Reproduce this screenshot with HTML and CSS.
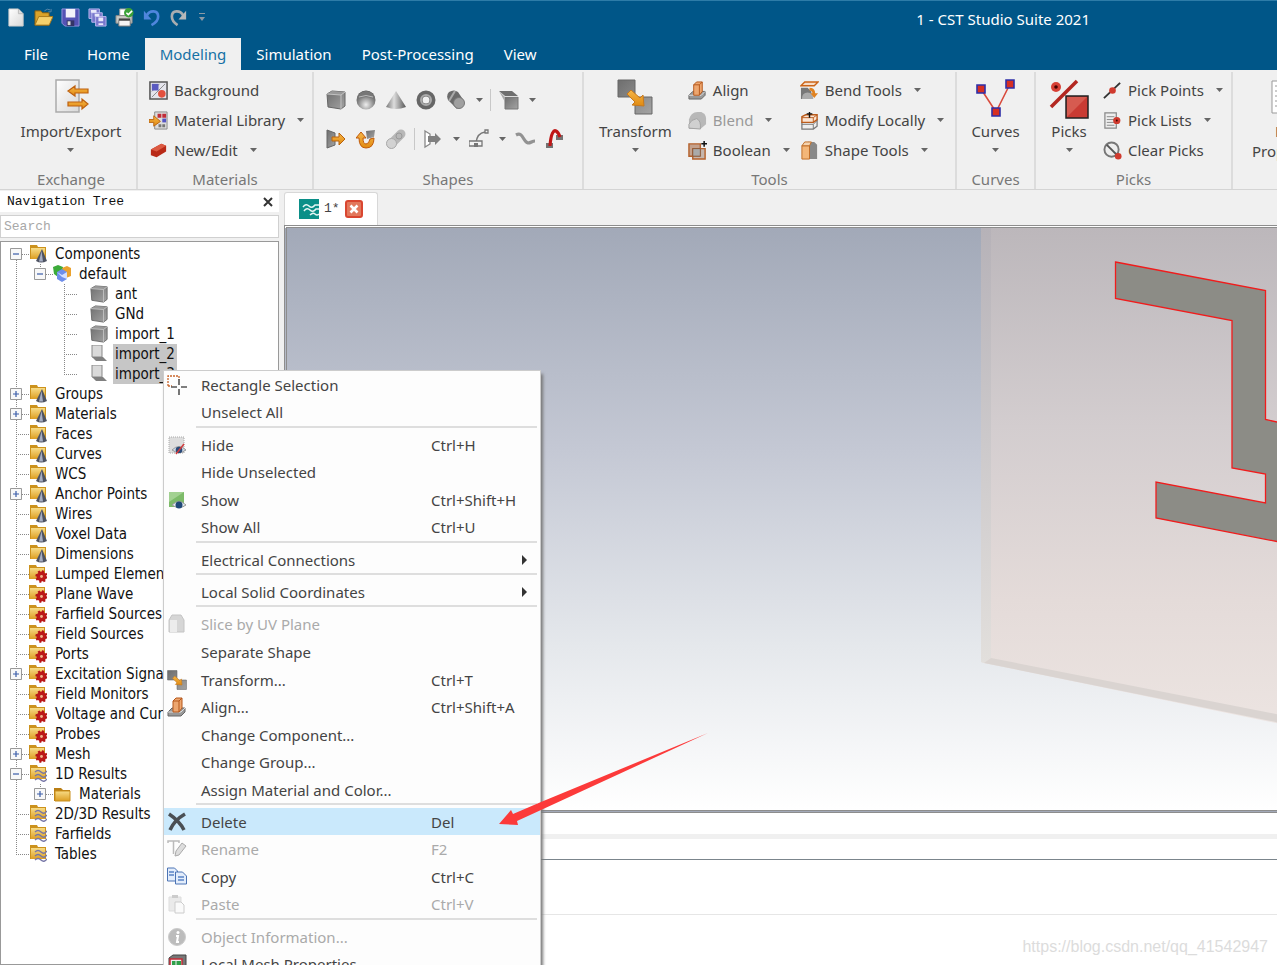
FILE: index.html
```html
<!DOCTYPE html>
<html lang="en">
<head>
<meta charset="utf-8">
<title>1 - CST Studio Suite 2021</title>
<link rel="stylesheet" href="styles.css">
</head>
<body>
<svg class="defs" aria-hidden="true">
  <defs>
    <linearGradient id="g-grey" x1="0" y1="0" x2="1" y2="1"><stop offset="0" stop-color="#6e6e6e"/><stop offset="1" stop-color="#a4a4a4"/></linearGradient>
    <linearGradient id="g-cone" x1="0" x2="1"><stop offset="0" stop-color="#777"/><stop offset=".4" stop-color="#ddd"/><stop offset="1" stop-color="#555"/></linearGradient>
    <linearGradient id="g-gold" x1="0" y1="0" x2="0" y2="1"><stop offset="0" stop-color="#f8dc86"/><stop offset="1" stop-color="#dc9e22"/></linearGradient>
    <linearGradient id="g-orange" x1="0" y1="0" x2="0" y2="1"><stop offset="0" stop-color="#f6b648"/><stop offset="1" stop-color="#e08a10"/></linearGradient>
    <linearGradient id="g-page" x1="0" y1="0" x2="1" y2="1"><stop offset="0" stop-color="#fff"/><stop offset="1" stop-color="#d8d8d8"/></linearGradient>
    <radialGradient id="g-ball" cx=".5" cy=".75" r=".7"><stop offset="0" stop-color="#eee"/><stop offset=".6" stop-color="#888"/><stop offset="1" stop-color="#555"/></radialGradient>
    <linearGradient id="g-face" x1="0" y1="0" x2="0" y2="1"><stop offset="0" stop-color="#bcb7bb"/><stop offset=".4" stop-color="#d3cdcf"/><stop offset=".75" stop-color="#e4dbd9"/><stop offset="1" stop-color="#ece4e1"/></linearGradient>
    <linearGradient id="g-side" x1="0" y1="0" x2="0" y2="1"><stop offset="0" stop-color="#b6b2b8"/><stop offset=".5" stop-color="#ccc9cb"/><stop offset="1" stop-color="#e2dfdc"/></linearGradient>
  </defs>
  <symbol id="caret" viewBox="0 0 7 4"><path d="M0 0h7L3.500 4z" fill="#666"/></symbol>
  <symbol id="new" viewBox="0 0 20 20"><path d="M2 1h10l5 5v13H2z" fill="url(#g-page)" stroke="#ccc"/><path d="M12 1v5h5" fill="#ddd" stroke="#bbb"/></symbol>
  <symbol id="open" viewBox="0 0 20 20"><path d="M1 3h6l2 2h7v13H1z" fill="#dba32a" stroke="#7d5a12"/><path d="M5 9h15l-4 9H1z" fill="#f5d06c" stroke="#a8781a"/><path d="M11 3q3-3 6-1m1-1v3h-3" fill="none" stroke="#5a87a8"/></symbol>
  <symbol id="save" viewBox="0 0 20 20"><path d="M1 1h18v18H4l-3-3z" fill="#5453b5" stroke="#9695dd"/><path d="M5 1h10v9H5z" fill="#f2f2fa"/><path d="M6 13h8v6H6z" fill="#333466"/><path d="M7 14h3v4H7z" fill="#ddd"/></symbol>
  <symbol id="saveall" viewBox="0 0 20 20"><g fill="#7876cc" stroke="#b9b8ee"><path d="M1 1h11v10H1z"/><path d="M4 5h11v10H4z"/><path d="M8 9h11v10H8z"/></g><path d="M3 2h6v3H3zM7 6h5v3H7zM11 10h5v4h-5zM11 16h5v2h-5z" fill="#e8e8fa"/></symbol>
  <symbol id="print" viewBox="0 0 20 20"><path d="M5 1h9v7H5z" fill="#fff" stroke="#999"/><path d="M1 8h17v8H1z" fill="#c9c9c4" stroke="#888"/><path d="M4 13h12v6H4z" fill="#f4f4f4" stroke="#777"/><path d="M4 11h12v2H4z" fill="#444"/><circle cx="14.500" cy="5" r="5" fill="#3ba238"/><path d="M12 5l2 2 4-4" fill="none" stroke="#fff" stroke-width="1.600"/></symbol>
  <symbol id="undo" viewBox="0 0 20 20"><path d="M5 8c3-6 12-6 12 1 0 4-3 7-7 9" fill="none" stroke="#4f86dd" stroke-width="2.800"/><path d="M2 3v9h8z" fill="#4f86dd"/></symbol>
  <symbol id="redo" viewBox="0 0 20 20"><path d="M15 8C12 2 3 2 3 9c0 4 3 7 6 9" fill="none" stroke="#a9adb0" stroke-width="2.800"/><path d="M18 3v9h-8z" fill="#b5b8ba"/></symbol>
  <symbol id="qat" viewBox="0 0 8 9"><path d="M1 0h6v1H1zM1 4h6L4 8z" fill="#8a9aa6"/></symbol>
  <symbol id="impexp" viewBox="-2 0 36 36"><path d="M1 1h23v32H1z" fill="url(#g-page)" stroke="#aaa" stroke-width="1.500"/><g fill="url(#g-orange)" stroke="#bd600f" stroke-width="1.200"><path d="M13 12l7-5v3h13v4H20v3z"/><path d="M33 25l-6 5v-3H13v-4h14v-3z"/></g></symbol>
  <symbol id="background" viewBox="0 0 20 20"><path d="M1 1h18v18H1z" fill="#e4e4ec" stroke="#555" stroke-width="1.600"/><path d="M3 17L17 3M11 3L3 11" stroke="#888"/><path d="M3 3h7v7H3z" fill="#5a5ac0"/><circle cx="13.500" cy="13.500" r="4" fill="#e2503e"/></symbol>
  <symbol id="matlib" viewBox="0 0 20 20"><path d="M6 1h13v18H6z" fill="#ddd" stroke="#888"/><path d="M9 3h4v4H9zM14 3h4v4h-4z" fill="#c22c38"/><path d="M14 8h4v4h-4z" fill="#5454c4"/><path d="M10 14h3v3h-3zM14 14h3v3h-3z" fill="#777"/><path d="M0 9h5V5l7 6-7 5v-4H0z" fill="url(#g-orange)" stroke="#b96513"/></symbol>
  <symbol id="brick" viewBox="0 0 20 20"><path d="M2 9l11-6 5 2v6L8 17l-6-2z" fill="#b92a17"/><path d="M2 9l11-6 5 2L8 11z" fill="#dc5a42"/></symbol>
  <symbol id="cube" viewBox="0 0 20 20"><path d="M1 4l5-3 13 1v14l-4 3-13-2z" fill="url(#g-grey)" stroke="#666"/><path d="M6 1l13 1-4 3-14-1z" fill="#999"/><path d="M1 4l14 1 4-3M15 5v14" fill="none" stroke="#c2c2c2"/></symbol>
  <symbol id="sphere" viewBox="0 0 20 20"><circle cx="10" cy="10" r="9.500" fill="url(#g-ball)"/><path d="M1 9q9-4 18 0Q17 1 10 1T1 9" fill="#777"/><path d="M3 7q7-3 14 0" fill="none" stroke="#bbb"/></symbol>
  <symbol id="cone" viewBox="0 0 20 20"><path d="M10 1L0 17q10 4 20 0z" fill="url(#g-cone)"/></symbol>
  <symbol id="torus" viewBox="0 0 20 20"><circle cx="10" cy="10" r="6.500" fill="none" stroke="#666" stroke-width="6"/><circle cx="10" cy="10" r="5" fill="none" stroke="#aaa" stroke-width="2"/></symbol>
  <symbol id="cylinder" viewBox="0 0 20 20"><path d="M3 2q5-3 9 0l6 9-7 8L2 10Q0 5 3 2" fill="#6b6b6b"/><path d="M9 1L3 11" stroke="#aaa" stroke-width="2"/><circle cx="13" cy="13" r="5.500" fill="#a0a0a0" stroke="#777"/></symbol>
  <symbol id="extr" viewBox="0 0 20 20"><path d="M0 1h13l6 5H6z" fill="#6e6e6e"/><path d="M6 7h13v12H6z" fill="url(#g-grey)" stroke="#777"/><path d="M6 6.500h13" stroke="#ddd"/><path d="M0 1l6 6v5z" fill="#aaa"/></symbol>
  <symbol id="extrude" viewBox="0 0 20 20"><path d="M1 1l8 3v12l-8 3z" fill="url(#g-grey)" stroke="#666"/><path d="M6 8h7V4l6 6-6 6v-4H6z" fill="url(#g-orange)" stroke="#b8620e"/></symbol>
  <symbol id="rotate" viewBox="0 0 20 20"><path d="M10 2l9-1-1 7-7 2z" fill="url(#g-grey)"/><path d="M18 9q0 10-8 10-7 0-7-10H0l5-6 5 6H7q0 6 3 6t4-5z" fill="url(#g-orange)" stroke="#c05a0a"/></symbol>
  <symbol id="loft" viewBox="0 0 20 20"><path d="M5 15L15 5" stroke="#b8b8b8" stroke-width="9" stroke-linecap="round"/><circle cx="5.500" cy="14.500" r="5" fill="#d2d2d2" stroke="#aaa"/><circle cx="13" cy="7" r="3" fill="none" stroke="#999"/></symbol>
  <symbol id="arrowface" viewBox="0 0 20 20"><path d="M2 2l5 3v10l-5 3z" fill="#fff" stroke="#888" stroke-width="1.300"/><path d="M5 7h7V4l6 6-6 6v-3H5z" fill="#808080"/></symbol>
  <symbol id="curvebox" viewBox="0 0 20 20"><path d="M7 14Q8 4 16 3" fill="none" stroke="#777" stroke-width="1.500"/><path d="M0 12h13v5H0zM16 1h3v3h-3z" fill="#f4f4f4" stroke="#777" stroke-width="1.300"/><path d="M5 14h4v4H5z" fill="#777"/></symbol>
  <symbol id="wave" viewBox="0 0 20 20"><path d="M1 6c7-4 7 7 12 8 3 0 4-2 7-2" fill="none" stroke="#929292" stroke-width="3.200"/></symbol>
  <symbol id="bond" viewBox="0 0 20 20"><path d="M1 14h7v5H1zM11 6h7v5h-7z" fill="#737373"/><path d="M5 17C6 3 9 1 11 2s3 3 4 6" fill="none" stroke="#bf1717" stroke-width="3.200"/></symbol>
  <symbol id="transform" viewBox="0 0 36 36"><path d="M1 1h17v17H1zM18 18h17v17H18z" fill="url(#g-grey)" stroke="#666"/><path d="M14 11l9 8 3-3 1 11-12-1 3-3-8-8z" fill="url(#g-orange)" stroke="#c7791d"/></symbol>
  <symbol id="align" viewBox="0 0 20 20"><path d="M1 15l4-4h13v4l-4 4H1z" fill="#999" stroke="#666"/><path d="M1 15h13l4-4" fill="none" stroke="#ddd"/><path d="M6 4l3-3h6v10l-3 4H6z" fill="#eda66f" stroke="#b5571b"/><path d="M6 4h6l3-3M12 4v11" fill="none" stroke="#b5571b"/></symbol>
  <symbol id="blend" viewBox="0 0 20 20"><path d="M1 9Q3 1 10 1h4q5 2 5 7v6l-6 5H1z" fill="#b8b8b8"/><path d="M1 18v-4q2-5 8-6 5 2 4 11z" fill="#d0d0d0" stroke="#a2a2a2"/></symbol>
  <symbol id="boolean" viewBox="0 0 20 20"><path d="M1 3h12v13H1z" fill="#c4a18c" stroke="#b5622d" stroke-width="1.500"/><path d="M5 8h13v11H5z" fill="#b29d90" fill-opacity=".7" stroke="#b5622d" stroke-width="1.500"/><path d="M5 8h8v8H5z" fill="#aaa" stroke="#8d5a39"/><path d="M17 0v6M14 3h6" stroke="#111" stroke-width="1.600"/></symbol>
  <symbol id="bend" viewBox="0 0 20 20"><path d="M1 5l4-4h14l-4 4z" fill="#f7dcc6" stroke="#cc6417" stroke-width="1.500"/><path d="M1 7h7l4 4v8H1z" fill="#777"/><path d="M2 19q0-7 6-7t6 7z" fill="#aaa"/><path d="M10 7q6 0 6 6h3l-4 5-4-5h2q0-3-3-3z" fill="#e08220"/></symbol>
  <symbol id="modify" viewBox="0 0 20 20"><path d="M2 12l4-3h12v7l-4 3H2z" fill="#eee" stroke="#777" stroke-width="1.300"/><path d="M2 14h12l4-4M14 14v5" fill="none" stroke="#777"/><path d="M2 6l4-2h12v5l-4 3H2z" fill="#fbe4d2" stroke="#bb5c1c" stroke-width="1.500"/><path d="M2 7h12v5M14 7l4-3" fill="none" stroke="#bb5c1c"/><path d="M10 7V1M7 3h6" stroke="#111" stroke-width="1.500"/></symbol>
  <symbol id="shapetools" viewBox="0 0 20 20"><path d="M3 4q3-4 8-3h4l3 3v15H3z" fill="#888"/><path d="M2 5h8v14H2z" fill="#f3b678" stroke="#c06c24"/><path d="M2 5l3-4h7l-2 4z" fill="#f5d3ae" stroke="#c06c24"/></symbol>
  <symbol id="curves" viewBox="0 0 40 40"><path d="M5 10L20 33 34 5" fill="none" stroke="#d94a3c" stroke-width="1.600"/><g fill="#d62f22" stroke="#2f2fa8" stroke-width="1.600"><path d="M1 6h8v8H1zM30 1h8v8h-8zM16 29h8v8h-8z"/></g></symbol>
  <symbol id="picks" viewBox="0 0 40 40"><path d="M2 28L28 2" stroke="#b32720" stroke-width="3.500"/><circle cx="7" cy="8" r="5" fill="#d74035"/><circle cx="7" cy="8" r="1.800" fill="#400"/><path d="M17 17h22v22H17z" fill="#c93b33" stroke="#222" stroke-width="1.500"/><path d="M18 38V18h20z" fill="#d65b50"/></symbol>
  <symbol id="pickpt" viewBox="0 0 20 20"><path d="M1 18L18 2" stroke="#333" stroke-width="2"/><circle cx="10" cy="10" r="3.500" fill="#d03a2e"/></symbol>
  <symbol id="picklist" viewBox="0 0 20 20"><path d="M2 2h12v16H2z" fill="#eee" stroke="#888" stroke-width="1.300"/><path d="M4 6h8M4 9h8M4 12h8M4 15h8" stroke="#888"/><circle cx="14.500" cy="10" r="3.800" fill="#d03a2e"/><circle cx="14.500" cy="10" r="1" fill="#400"/></symbol>
  <symbol id="clear" viewBox="0 0 20 20"><circle cx="9" cy="9" r="7.500" fill="#eee" stroke="#777" stroke-width="2"/><path d="M4 4l11 11" stroke="#555" stroke-width="2"/><circle cx="16" cy="16" r="3.500" fill="#d03a2e"/></symbol>
  <symbol id="props" viewBox="0 0 34 36"><path d="M1 2h30v32H1z" fill="#fff" stroke="#999"/><path d="M4 7h20M4 12h20M4 17h20M4 22h20M4 27h20" stroke="#999"/></symbol>
  <symbol id="folder" viewBox="0 0 18 18"><path d="M1 3h7l2 2h7v11H1z" fill="#b97e14"/><path d="M2 6h15v10H2z" fill="url(#g-gold)" stroke="#c98f1d"/></symbol>
  <symbol id="f-cone" viewBox="0 0 18 18"><path d="M1 0h7l1 2h8v12H1z" fill="#cc921d"/><path d="M2 3h14v11H2z" fill="url(#g-gold)"/><path d="M13 4L7 16q5 3 11 0z" fill="#4e5362"/><path d="M12.500 6L10 16.500h4z" fill="#a6aec4"/></symbol>
  <symbol id="f-gear" viewBox="0 0 18 18"><path d="M0 0h7l1 2h8v12H0z" fill="#cc921d"/><path d="M1 3h14v11H1z" fill="url(#g-gold)"/><circle cx="12.500" cy="11.500" r="5" fill="#bd1a1a" stroke="#b51616" stroke-width="2.400" stroke-dasharray="2 1.900"/><circle cx="12.500" cy="11.500" r="1.400" fill="#f0b890"/></symbol>
  <symbol id="f-wave" viewBox="0 0 18 18"><path d="M1 0h7l1 2h8v12H1z" fill="#cc921d"/><path d="M2 3h14v11H2z" fill="url(#g-gold)"/><path d="M6 7q3-3 6 0t6-1M6 11q3-3 6 0t6-1M6 15q3-3 6 0t6-1" fill="none" stroke="#7676a6" stroke-width="1.400"/></symbol>
  <symbol id="comps" viewBox="0 0 18 18"><path d="M0 2l5-2 5 2v7l-5 3-4-3z" fill="#3cab3a"/><path d="M9 3l5-2 4 2v8l-5 2z" fill="#eba22e"/><path d="M4 7l5-3 5 3v7l-5 3-5-3z" fill="#6f8eea"/><path d="M4 7l5 3 5-3v7l-5-2z" fill="#d5e0ff"/></symbol>
  <symbol id="sheet" viewBox="0 0 18 18"><path d="M2 0h10v12H2z" fill="#dadada" stroke="#888"/><path d="M2 12h11l4 4H6z" fill="#808080"/></symbol>
  <symbol id="plus" viewBox="0 0 12 12"><path d="M.5.500h11v11H.5z" fill="#f8f8f8" stroke="#999"/><path d="M3 6h6M6 3v6" stroke="#3a5da8" stroke-width="1.200"/></symbol>
  <symbol id="minus" viewBox="0 0 12 12"><path d="M.5.500h11v11H.5z" fill="#f8f8f8" stroke="#999"/><path d="M3 6h6" stroke="#3a5da8" stroke-width="1.200"/></symbol>
  <symbol id="rectsel" viewBox="0 0 20 20"><path d="M1 11V1h11v4M1 11h4" fill="none" stroke="#c9652b" stroke-width="1.300" stroke-dasharray="2 1"/><path d="M12 4v6M12 14v6M4 12h6M14 12h6" stroke="#555" stroke-width="1.600"/></symbol>
  <symbol id="hide" viewBox="0 0 20 20"><path d="M2 2h15v16H2z" fill="#ddd" stroke="#aaa" stroke-dasharray="1 1"/><path d="M5 15q7-7 14 0-7 5-14 0" fill="#cfdbe8" stroke="#999"/><circle cx="12" cy="15" r="3.300" fill="#294a78"/><path d="M9 19l8-10" stroke="#d23b3b" stroke-width="1.500"/></symbol>
  <symbol id="show" viewBox="0 0 20 20"><path d="M2 2h15v15H2z" fill="#7dbb69"/><path d="M2 2h15L2 12z" fill="#a2d191"/><path d="M5 15q7-7 14 0-7 5-14 0" fill="#e8eef4" stroke="#999"/><circle cx="12" cy="15" r="3.500" fill="#1f4878"/></symbol>
  <symbol id="slice" viewBox="0 0 20 20"><path d="M2 6l3-5h9l3 5v12H2z" fill="#d6d6d6" stroke="#c4c4c4"/><path d="M3 6h7v12H3z" fill="#ececec"/></symbol>
  <symbol id="delete" viewBox="0 0 20 20"><path d="M2 2c6 4 12 10 15 16M18 2C11 6 6 11 3 18" fill="none" stroke="#4a4f54" stroke-width="3.500"/></symbol>
  <symbol id="rename" viewBox="0 0 20 20"><path d="M1 4V2h11v2M6.500 2v13" fill="none" stroke="#bbb" stroke-width="1.500"/><path d="M8 17l1-5 6-8 4 3-7 9z" fill="#ddd" stroke="#aaa"/></symbol>
  <symbol id="copy" viewBox="0 0 20 20"><g fill="#e3edfb" stroke="#4c74b5"><path d="M.5 1h7l3 3v10H.5z"/><path d="M8.500 5h7l4 4v8h-11z"/></g><path d="M2 5h5M2 8h5M11 10h6M11 13h6" stroke="#5b84c6" stroke-width="1.300"/></symbol>
  <symbol id="paste" viewBox="0 0 20 20"><path d="M2 3h12v14H2z" fill="#eaeaea" stroke="#ddd"/><path d="M5 1h6v3H5z" fill="#ccc"/><path d="M8 8h6l3 3v8H8z" fill="#fafafa" stroke="#ccc"/></symbol>
  <symbol id="info" viewBox="0 0 20 20"><circle cx="10" cy="10" r="8.500" fill="#bcbcbc" stroke="#ccc"/><circle cx="11" cy="5.500" r="1.500" fill="#fff"/><path d="M9 9h2l-1 6h2" fill="none" stroke="#fff" stroke-width="2"/></symbol>
  <symbol id="mesh" viewBox="0 0 20 20"><path d="M2 4l4-3h13v15l-3 3H2z" fill="#777" stroke="#444"/><path d="M3 5h12v13H3z" fill="#eee" stroke="#c52c37" stroke-width="1.500"/><path d="M5 7h9v10H5z" fill="#2fa04a"/><path d="M9 7v10M5 12h9" stroke="#eee"/></symbol>
</svg>

<header class="titlebar">
  <div class="quick">
    <button aria-label="New"><svg><use href="#new"/></svg></button>
    <button aria-label="Open"><svg><use href="#open"/></svg></button>
    <button aria-label="Save"><svg><use href="#save"/></svg></button>
    <button aria-label="Save all"><svg><use href="#saveall"/></svg></button>
    <button aria-label="Print"><svg><use href="#print"/></svg></button>
    <button aria-label="Undo"><svg><use href="#undo"/></svg></button>
    <button aria-label="Redo"><svg><use href="#redo"/></svg></button>
    <button class="more" aria-label="Customize"><svg><use href="#qat"/></svg></button>
  </div>
  <h1>1 - CST Studio Suite 2021</h1>
</header>
<nav class="tabs">
  <button class="file">File</button><button>Home</button><button class="active">Modeling</button><button>Simulation</button><button>Post-Processing</button><button>View</button>
</nav>

<section class="ribbon">
  <div class="group exchange">
    <div class="tools">
      <button class="big"><svg><use href="#impexp"/></svg>Import/Export<svg class="caret"><use href="#caret"/></svg></button>
    </div>
    <h2>Exchange</h2>
  </div>
  <div class="group materials">
    <div class="tools">
      <div class="col">
        <button><svg><use href="#background"/></svg>Background</button>
        <button><svg><use href="#matlib"/></svg>Material Library<svg class="caret"><use href="#caret"/></svg></button>
        <button><svg><use href="#brick"/></svg>New/Edit<svg class="caret"><use href="#caret"/></svg></button>
      </div>
    </div>
    <h2>Materials</h2>
  </div>
  <div class="group shapes">
    <div class="palette">
      <div class="line">
        <button aria-label="Brick"><svg><use href="#cube"/></svg></button>
        <button aria-label="Sphere"><svg><use href="#sphere"/></svg></button>
        <button aria-label="Cone"><svg><use href="#cone"/></svg></button>
        <button aria-label="Torus"><svg><use href="#torus"/></svg></button>
        <button aria-label="Cylinder"><svg><use href="#cylinder"/></svg></button>
        <button class="drop" aria-label="More shapes"><svg class="caret"><use href="#caret"/></svg></button>
        <span class="bar"></span>
        <button aria-label="Extrusion"><svg><use href="#extr"/></svg></button>
        <button class="drop" aria-label="More extrusions"><svg class="caret"><use href="#caret"/></svg></button>
      </div>
      <div class="line">
        <button aria-label="Extrude face"><svg><use href="#extrude"/></svg></button>
        <button aria-label="Rotate face"><svg><use href="#rotate"/></svg></button>
        <button aria-label="Loft"><svg><use href="#loft"/></svg></button>
        <span class="bar"></span>
        <button aria-label="Face"><svg><use href="#arrowface"/></svg></button>
        <button class="drop" aria-label="More faces"><svg class="caret"><use href="#caret"/></svg></button>
        <button aria-label="Sweep"><svg><use href="#curvebox"/></svg></button>
        <button class="drop" aria-label="More sweeps"><svg class="caret"><use href="#caret"/></svg></button>
        <button aria-label="Wire"><svg><use href="#wave"/></svg></button>
        <button aria-label="Bond wire"><svg><use href="#bond"/></svg></button>
      </div>
    </div>
    <h2>Shapes</h2>
  </div>
  <div class="group edit">
    <div class="tools">
      <button class="big"><svg><use href="#transform"/></svg>Transform<svg class="caret"><use href="#caret"/></svg></button>
      <div class="col">
        <button><svg><use href="#align"/></svg>Align</button>
        <button class="dim"><svg><use href="#blend"/></svg>Blend<svg class="caret"><use href="#caret"/></svg></button>
        <button><svg><use href="#boolean"/></svg>Boolean<svg class="caret"><use href="#caret"/></svg></button>
      </div>
      <div class="col">
        <button><svg><use href="#bend"/></svg>Bend Tools<svg class="caret"><use href="#caret"/></svg></button>
        <button><svg><use href="#modify"/></svg>Modify Locally<svg class="caret"><use href="#caret"/></svg></button>
        <button><svg><use href="#shapetools"/></svg>Shape Tools<svg class="caret"><use href="#caret"/></svg></button>
      </div>
    </div>
    <h2>Tools</h2>
  </div>
  <div class="group curves">
    <div class="tools">
      <button class="big tall"><svg><use href="#curves"/></svg>Curves<svg class="caret"><use href="#caret"/></svg></button>
    </div>
    <h2>Curves</h2>
  </div>
  <div class="group picks">
    <div class="tools">
      <button class="big tall"><svg><use href="#picks"/></svg>Picks<svg class="caret"><use href="#caret"/></svg></button>
      <div class="col">
        <button><svg><use href="#pickpt"/></svg>Pick Points<svg class="caret"><use href="#caret"/></svg></button>
        <button><svg><use href="#picklist"/></svg>Pick Lists<svg class="caret"><use href="#caret"/></svg></button>
        <button><svg><use href="#clear"/></svg>Clear Picks</button>
      </div>
    </div>
    <h2>Picks</h2>
  </div>
  <div class="group props">
    <div class="tools">
      <button class="big"><svg><use href="#props"/></svg>Edit<br>Properties</button>
    </div>
  </div>
</section>

<main class="work">
  <aside class="nav">
    <div class="navhead"><span>Navigation Tree</span><button aria-label="Close"><svg viewBox="0 0 10 10"><path d="M1 1l8 8M9 1L1 9" stroke="#333" stroke-width="2"/></svg></button></div>
    <input class="search" type="text" placeholder="Search" aria-label="Search">
    <div class="treebox">
      <ul class="tree">
        <li><div class="row"><button class="tg" aria-label="Collapse"><svg><use href="#minus"/></svg></button><i></i><svg><use href="#f-cone"/></svg><span>Components</span></div>
          <ul class="single">
            <li><div class="row"><button class="tg" aria-label="Collapse"><svg><use href="#minus"/></svg></button><i></i><svg><use href="#comps"/></svg><span>default</span></div>
              <ul class="solids">
                <li><div class="row leaf"><i></i><svg><use href="#cube"/></svg><span>ant</span></div></li>
                <li><div class="row leaf"><i></i><svg><use href="#cube"/></svg><span>GNd</span></div></li>
                <li><div class="row leaf"><i></i><svg><use href="#cube"/></svg><span>import_1</span></div></li>
                <li><div class="row leaf"><i></i><svg><use href="#sheet"/></svg><span class="sel">import_2</span></div></li>
                <li><div class="row leaf"><i></i><svg><use href="#sheet"/></svg><span class="sel">import_3</span></div></li>
              </ul>
            </li>
          </ul>
        </li>
        <li><div class="row"><button class="tg" aria-label="Expand"><svg><use href="#plus"/></svg></button><i></i><svg><use href="#f-cone"/></svg><span>Groups</span></div></li>
        <li><div class="row"><button class="tg" aria-label="Expand"><svg><use href="#plus"/></svg></button><i></i><svg><use href="#f-cone"/></svg><span>Materials</span></div></li>
        <li><div class="row leaf"><i></i><svg><use href="#f-cone"/></svg><span>Faces</span></div></li>
        <li><div class="row leaf"><i></i><svg><use href="#f-cone"/></svg><span>Curves</span></div></li>
        <li><div class="row leaf"><i></i><svg><use href="#f-cone"/></svg><span>WCS</span></div></li>
        <li><div class="row"><button class="tg" aria-label="Expand"><svg><use href="#plus"/></svg></button><i></i><svg><use href="#f-cone"/></svg><span>Anchor Points</span></div></li>
        <li><div class="row leaf"><i></i><svg><use href="#f-cone"/></svg><span>Wires</span></div></li>
        <li><div class="row leaf"><i></i><svg><use href="#f-cone"/></svg><span>Voxel Data</span></div></li>
        <li><div class="row leaf"><i></i><svg><use href="#f-cone"/></svg><span>Dimensions</span></div></li>
        <li><div class="row leaf"><i></i><svg><use href="#f-gear"/></svg><span>Lumped Elements</span></div></li>
        <li><div class="row leaf"><i></i><svg><use href="#f-gear"/></svg><span>Plane Wave</span></div></li>
        <li><div class="row leaf"><i></i><svg><use href="#f-gear"/></svg><span>Farfield Sources</span></div></li>
        <li><div class="row leaf"><i></i><svg><use href="#f-gear"/></svg><span>Field Sources</span></div></li>
        <li><div class="row leaf"><i></i><svg><use href="#f-gear"/></svg><span>Ports</span></div></li>
        <li><div class="row"><button class="tg" aria-label="Expand"><svg><use href="#plus"/></svg></button><i></i><svg><use href="#f-gear"/></svg><span>Excitation Signals</span></div></li>
        <li><div class="row leaf"><i></i><svg><use href="#f-gear"/></svg><span>Field Monitors</span></div></li>
        <li><div class="row leaf"><i></i><svg><use href="#f-gear"/></svg><span>Voltage and Current</span></div></li>
        <li><div class="row leaf"><i></i><svg><use href="#f-gear"/></svg><span>Probes</span></div></li>
        <li><div class="row"><button class="tg" aria-label="Expand"><svg><use href="#plus"/></svg></button><i></i><svg><use href="#f-gear"/></svg><span>Mesh</span></div></li>
        <li><div class="row"><button class="tg" aria-label="Collapse"><svg><use href="#minus"/></svg></button><i></i><svg><use href="#f-wave"/></svg><span>1D Results</span></div>
          <ul class="single">
            <li><div class="row"><button class="tg" aria-label="Expand"><svg><use href="#plus"/></svg></button><i></i><svg><use href="#folder"/></svg><span>Materials</span></div></li>
          </ul>
        </li>
        <li><div class="row leaf"><i></i><svg><use href="#f-wave"/></svg><span>2D/3D Results</span></div></li>
        <li><div class="row leaf"><i></i><svg><use href="#f-wave"/></svg><span>Farfields</span></div></li>
        <li><div class="row leaf"><i></i><svg><use href="#f-wave"/></svg><span>Tables</span></div></li>
      </ul>
    </div>
  </aside>

  <section class="doc">
    <div class="doctabs">
      <div class="doctab">
        <svg class="logo" viewBox="0 0 20 20"><path d="M0 0h20v20H0z" fill="#0b8f88"/><path d="M4 8q3-4 6-1t6-1h4M5 12q3-4 6-1t6-1h3M11 16q3-3 5-1t4 0" fill="none" stroke="#e6f6f4" stroke-width="1.500"/></svg>
        <span>1*</span>
        <button aria-label="Close tab"><svg viewBox="0 0 18 18"><rect x="1" y="1" width="16" height="16" rx="2" fill="#e2785c" stroke="#d94630" stroke-width="2"/><path d="M5.500 5.500l7 7M12.500 5.500l-7 7" stroke="#fff" stroke-width="2.600"/></svg></button>
      </div>
    </div>
    <div class="view">
      <svg viewBox="287 228 990 582" preserveAspectRatio="xMinYMin slice" role="img" aria-label="3D model">
        <path d="M981 228h300v496L984 663l-3-1z" fill="url(#g-face)"/>
        <path d="M981 228h10v430l-7 5-3-1z" fill="url(#g-side)"/>
        <path d="M984 663l7-5 290 57v8z" fill="#dad4d1"/>
        <path d="M1115.500 262l150 28.500v129l14 3v119.500l-123.500-24V482l109.500 21v-29l-33.500-6V320.500l-116.500-22z" fill="#8c8c86" stroke="#f01c1c" stroke-width="1.300"/>
      </svg>
    </div>
    <div class="msg-a"></div>
    <div class="msg-b"></div>
    <div class="msg-c"></div>
    <div class="msg-d"><p>https://blog.csdn.net/qq_41542947</p></div>
  </section>
</main>

<div class="menu" role="menu">
  <div class="set">
    <button><svg><use href="#rectsel"/></svg><span>Rectangle Selection</span></button>
    <button><b></b><span>Unselect All</span></button>
  </div>
  <hr>
  <div class="set">
    <button><svg><use href="#hide"/></svg><span>Hide</span><kbd>Ctrl+H</kbd></button>
    <button><b></b><span>Hide Unselected</span></button>
    <button><svg><use href="#show"/></svg><span>Show</span><kbd>Ctrl+Shift+H</kbd></button>
    <button><b></b><span>Show All</span><kbd>Ctrl+U</kbd></button>
  </div>
  <hr>
  <div class="set">
    <button><b></b><span>Electrical Connections</span><svg class="sub" viewBox="0 0 5 10"><path d="M0 0l5 5-5 5z" fill="#333"/></svg></button>
  </div>
  <hr>
  <div class="set">
    <button><b></b><span>Local Solid Coordinates</span><svg class="sub" viewBox="0 0 5 10"><path d="M0 0l5 5-5 5z" fill="#333"/></svg></button>
  </div>
  <hr>
  <div class="set seven">
    <button disabled><svg><use href="#slice"/></svg><span>Slice by UV Plane</span></button>
    <button><b></b><span>Separate Shape</span></button>
    <button><svg><use href="#transform"/></svg><span>Transform...</span><kbd>Ctrl+T</kbd></button>
    <button><svg><use href="#align"/></svg><span>Align...</span><kbd>Ctrl+Shift+A</kbd></button>
    <button><b></b><span>Change Component...</span></button>
    <button><b></b><span>Change Group...</span></button>
    <button><b></b><span>Assign Material and Color...</span></button>
  </div>
  <hr>
  <div class="set">
    <button class="hot"><svg><use href="#delete"/></svg><span>Delete</span><kbd>Del</kbd></button>
    <button disabled><svg><use href="#rename"/></svg><span>Rename</span><kbd>F2</kbd></button>
    <button><svg><use href="#copy"/></svg><span>Copy</span><kbd>Ctrl+C</kbd></button>
    <button disabled><svg><use href="#paste"/></svg><span>Paste</span><kbd>Ctrl+V</kbd></button>
  </div>
  <hr>
  <div class="set">
    <button disabled><svg><use href="#info"/></svg><span>Object Information...</span></button>
    <button><svg><use href="#mesh"/></svg><span>Local Mesh Properties...</span></button>
  </div>
</div>
<svg class="pointer" viewBox="0 0 210 94" aria-hidden="true"><path d="M0 91L12 77l2 4L42 69 209 0 42 77 18 88l1 4z" fill="#fc3a3a"/></svg>
</body>
</html>
```
FILE: styles.css
```css
* { box-sizing: border-box; }
body {
  margin: 0;
  height: 100vh;
  overflow: hidden;
  display: flex;
  flex-direction: column;
  position: relative;
  background: #f0f0f0;
  color: #444;
  font: 15px/20px "Noto Sans", "Open Sans", sans-serif;
}
button {
  border: 0;
  padding: 0;
  background: none;
  color: inherit;
  font: inherit;
  white-space: nowrap;
}
svg { display: block; flex: none; }
.defs { position: absolute; width: 0; height: 0; }
h1, h2, p { margin: 0; font: inherit; }

.titlebar {
  flex: none;
  height: 38px;
  display: flex;
  justify-content: space-between;
  align-items: center;
  padding: 0 187px 2px 7px;
  background: #005688;
  border-top: 1px solid #2d7ca8;
  color: #fff;
}
.quick { display: flex; gap: 8px; align-items: center; padding-bottom: 2px; }
.quick svg { width: 19px; height: 19px; }
.quick .more { padding-left: 2px; }
.quick .more svg { width: 8px; height: 9px; }

.tabs { flex: none; display: flex; height: 32px; background: #005688; color: #fff; }
.tabs button { padding: 0 15px; }
.tabs .file { padding: 0 24px; }
.tabs .active { background: #f0f0f0; color: #1670a5; }

.ribbon {
  flex: none;
  display: flex;
  height: 120px;
  overflow: hidden;
  border-bottom: 1px solid #d4d4d4;
  padding-top: 2px;
}
.group {
  flex: none;
  display: flex;
  flex-direction: column;
  justify-content: space-between;
  border-right: 2px solid #dcdcdc;
  padding-top: 3px;
}
.group h2 { text-align: center; color: #777; height: 20px; }
.tools { display: flex; height: 90px; }
.col { display: flex; flex-direction: column; align-items: flex-start; }
.col button { display: flex; align-items: center; height: 30px; gap: 6px; }
.col svg { width: 19px; height: 19px; }
.ribbon .caret { width: 7px; height: 4px; margin-left: 6px; }
.dim { color: #999; }
.big { display: flex; flex-direction: column; align-items: center; padding-top: 4px; }
.big svg { width: 36px; height: 36px; margin-bottom: 6px; }
.big.tall svg { width: 40px; height: 40px; margin-bottom: 2px; }
.ribbon .big .caret { width: 7px; height: 4px; margin: 7px 0 0; }
.exchange { width: 138px; padding-left: 6px; }
.exchange .tools { justify-content: center; }
.materials { width: 176px; }
.materials .tools { padding-left: 11px; }
.shapes { width: 270px; }
.edit { width: 373px; }
.edit .tools { padding-left: 15px; gap: 10px; }
.edit .big { margin-right: 6px; }
.curves { width: 79px; }
.curves .tools { justify-content: center; }
.picks { width: 197px; }
.picks .tools { padding-left: 13px; gap: 14px; }
.props { border: 0; }
.props .tools { padding-left: 19px; }
.palette { padding: 5px 0 0 7px; }
.line { display: flex; align-items: center; height: 39px; }
.line button { width: 30px; display: flex; justify-content: center; }
.line svg { width: 20px; height: 20px; }
.line .drop { width: 16px; }
.line .caret { margin: 0; }
.bar { width: 1px; height: 22px; margin: 0 3px; background: #c8c8c8; }

.work { flex: 1; min-height: 0; display: flex; gap: 5px; }
.nav { width: 279px; flex: none; display: flex; flex-direction: column; gap: 3px; padding-top: 1px; }
.navhead {
  display: flex;
  justify-content: space-between;
  align-items: center;
  height: 21px;
  padding: 0 6px 0 7px;
  background: #fff;
  color: #111;
  font: 13px/20px "Liberation Mono", monospace;
}
.navhead svg { width: 10px; height: 10px; }
.search {
  height: 23px;
  width: 100%;
  border: 1px solid #d0d0d0;
  padding: 0 3px;
  background: #fff;
  font: 13px/20px "Liberation Mono", monospace;
}
.search::placeholder { color: #a8a8a8; opacity: 1; }
.treebox {
  flex: 1;
  min-height: 0;
  overflow: hidden;
  background: #fff;
  border: 1px solid #999;
  padding-top: 2px;
  color: #111;
  font: 15px/20px "DejaVu Sans Condensed", "Noto Sans", sans-serif;
}
.treebox ul {
  list-style: none;
  margin: 0;
  padding: 0;
  background: repeating-linear-gradient(#888 0 1px, transparent 1px 2px) 15px 0 / 1px calc(100% - 10px) no-repeat;
}
.treebox ul ul { margin-left: 24px; }
.treebox .tree { background-position: 15px 10px; background-size: 1px calc(100% - 20px); }
.treebox .single { background-size: 1px 10px; }
.row { display: flex; align-items: center; height: 20px; padding-left: 9px; white-space: nowrap; }
.row svg { width: 18px; height: 18px; }
.row .tg svg { width: 12px; height: 12px; }
.row i { width: 7px; height: 1px; background: repeating-linear-gradient(90deg, #888 0 1px, transparent 1px 2px); }
.row span { margin-left: 6px; padding: 0 2px; }
.row .sel { background: #c6c6c6; }
.leaf { padding-left: 15px; }
.leaf i { width: 13px; }
.solids .leaf i { margin-right: 13px; }
.solids .row span { margin-left: 5px; }

.doc { flex: 1; min-width: 0; display: flex; flex-direction: column; }
.doctabs { flex: none; height: 35px; display: flex; align-items: flex-end; }
.doctab {
  display: flex;
  align-items: center;
  gap: 5px;
  height: 33px;
  padding: 0 14px;
  background: #fff;
  border: 1px solid #d8d8d8;
  border-bottom: 0;
  border-radius: 3px 3px 0 0;
  font: 13px/20px "Liberation Mono", monospace;
}
.doctab svg { width: 18px; height: 18px; }
.doctab .logo { width: 20px; height: 20px; }
.view {
  flex: 1;
  min-height: 0;
  overflow: hidden;
  border: 3px double #8d8d8d;
  border-right: 0;
  background: linear-gradient(#a2a9b8, #c4c8d4 38%, #e5e8ec 72%, #fff);
}
.view svg { width: 100%; height: 100%; }
.msg-a { flex: none; height: 21px; background: #fff; }
.msg-b { flex: none; height: 25px; background: #fff; border-top: 5px solid #f0f0f0; }
.msg-c { flex: none; height: 56px; background: #fff; border-top: 1px solid #7b858c; border-bottom: 1px solid #e6e6e6; }
.msg-d {
  flex: none;
  height: 50px;
  padding: 22px 9px 0 0;
  background: #fff;
  color: #dcdcdc;
  text-align: right;
  font: 16px/20px "Liberation Sans", sans-serif;
}

.menu {
  position: absolute;
  left: 163px;
  top: 370px;
  width: 378px;
  background: #fdfdfd;
  border: 1px solid #ccc;
  box-shadow: 2px 4px 3px #777;
}
.set { display: flex; flex-direction: column; }
.set button { display: flex; align-items: center; height: 27px; padding: 0 13px 0 3px; text-align: left; }
.set button:nth-child(even), .seven button:first-child { height: 28px; }
.set svg, .set b { width: 20px; height: 20px; margin-right: 14px; flex: none; }
.set span { flex: 1; }
.set kbd { font: inherit; width: 96px; }
.set .sub { width: 5px; height: 10px; margin: 0; }
.set button:disabled { color: #aaa; }
.set .hot { background: #cae9fc; }
.menu hr { height: 2px; margin: 0 3px 3px 32px; border: 0; background: #dedede; }

.pointer { position: absolute; left: 499px; top: 733px; width: 210px; height: 94px; }
```
